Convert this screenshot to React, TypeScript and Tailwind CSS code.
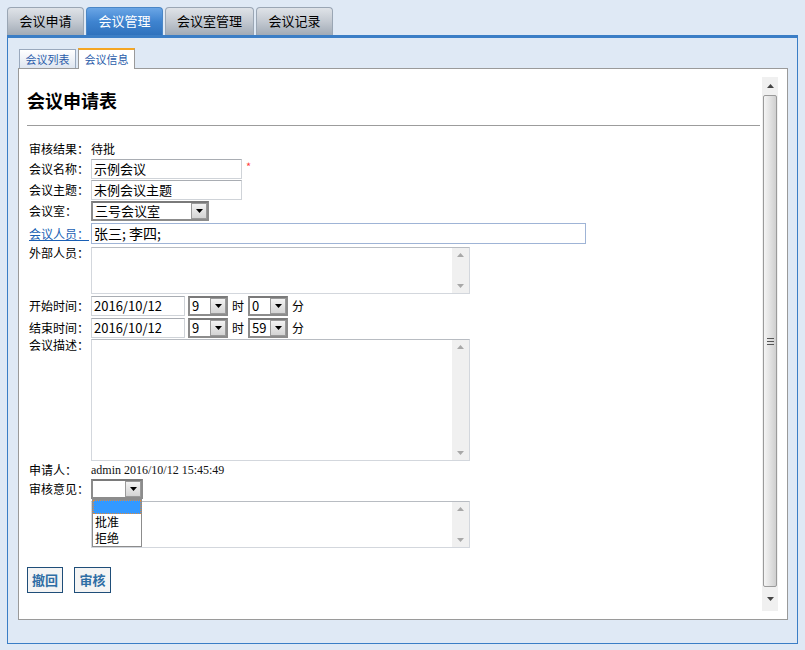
import React from 'react'

const font = { fontFamily: '"Noto Sans CJK SC", "Liberation Sans", sans-serif' }

function Arrow({ up, className = '' }: { up?: boolean; className?: string }) {
  return (
    <svg width="7" height="4" viewBox="0 0 7 4" className={className}>
      {up ? <path d="M0 4 L3.5 0 L7 4 Z" fill="currentColor" /> : <path d="M0 0 L7 0 L3.5 4 Z" fill="currentColor" />}
    </svg>
  )
}

function Select({ value, width }: { value: string; width: number }) {
  return (
    <div
      className="flex h-[20px] items-center border-2 border-[#8c8c8c] border-t-[#7a7a7a] bg-white"
      style={{ width }}
    >
      <span className="flex-1 pb-[2px] pl-[2px] text-[13px] leading-none text-black">{value}</span>
      <div className="flex h-[16px] w-[16px] items-center justify-center border border-[#9a9a9a] bg-gradient-to-b from-[#f3f3f3] to-[#d4d4d4]">
        <Arrow className="text-black" />
      </div>
    </div>
  )
}

function TextBox({ value, width }: { value: string; width: number }) {
  return (
    <div
      className="flex h-[20px] items-center border border-[#cfd3d8] border-t-[#a9adb3] bg-white pb-[2px] pl-[2px] text-[13px] leading-none text-black"
      style={{ width }}
    >
      {value}
    </div>
  )
}

function TextArea({ height }: { height: number }) {
  return (
    <div
      className="flex w-[379px] border border-[#d3d7dd] border-t-[#b8bcc2] bg-white"
      style={{ height }}
    >
      <div className="flex-1" />
      <div className="flex w-[17px] flex-col items-center justify-between bg-[#f0f0f0] py-[5px]">
        <Arrow up className="text-[#a8a8a8]" />
        <Arrow className="text-[#a8a8a8]" />
      </div>
    </div>
  )
}

function Label({ children, link, top }: { children: React.ReactNode; link?: boolean; top?: boolean }) {
  return (
    <div
      className={`w-[62px] shrink-0 text-[12px] ${top ? 'leading-[12px]' : 'leading-[20px]'} ${
        link ? 'text-[#1a5fb4] underline' : 'text-black'
      }`}
    >
      {children}
    </div>
  )
}

export default function App() {
  return (
    <div className="h-[650px] w-[805px] bg-[#dfe9f5] pl-[7px] pt-[7px]" style={font}>
      {/* top tabs */}
      <div className="flex h-[28px] gap-[2px]">
        {['会议申请', '会议管理', '会议室管理', '会议记录'].map((t, i) => (
          <div
            key={t}
            className={`flex h-[28px] items-center justify-center rounded-t-[4px] border border-b-0 pb-[1px] text-[13px] ${
              i === 1
                ? 'border-[#4a86c6] bg-gradient-to-b from-[#6aa6e6] via-[#3f84d0] to-[#2f72bd] text-white'
                : 'border-[#9aa6b4] bg-gradient-to-b from-[#dfe3e8] via-[#c3c9d1] to-[#a2abb6] text-black'
            } ${i === 2 ? 'w-[89px]' : 'w-[77px]'}`}
          >
            {t}
          </div>
        ))}
      </div>

      {/* panel */}
      <div className="h-[609px] w-[791px] border border-t-[3px] border-[#3b7ec6] px-[10px] pt-[10px]">
        {/* sub tabs */}
        <div className="relative z-10 flex h-[20px] items-end gap-[2px] pl-[1px]">
          <div className="flex h-[19px] w-[57px] items-center justify-center border border-b-0 border-[#9aa9bd] bg-gradient-to-b from-white to-[#dfe6f0] text-[11px] text-[#2a5caa]">
            会议列表
          </div>
          <div className="mb-[-1px] flex h-[21px] w-[57px] items-center justify-center border border-b-0 border-[#9a9a9a] border-t-2 border-t-[#f5a623] bg-white pb-[1px] text-[11px] text-[#2a5caa]">
            会议信息
          </div>
        </div>

        {/* content frame */}
        <div className="flex h-[552px] w-[770px] border border-[#9a9a9a] bg-white p-[8px] pr-[9px]">
          <div className="relative flex-1">
            <h2 className="mt-[11px] text-[18px] font-bold leading-[24px] text-black">会议申请表</h2>
            <div className="mt-[13px] h-px w-[733px] bg-[#9c9c9c]" />

            <div className="flex flex-col pl-[2px]">
              <div className="mt-[13px] flex h-[20px]">
                <Label>审核结果：</Label>
                <span className="text-[12px] leading-[20px]">待批</span>
              </div>
              <div className="flex h-[20px] items-center">
                <Label>会议名称：</Label>
                <TextBox value="示例会议" width={151} />
                <span className="ml-[4px] self-start text-[11px] leading-[14px] text-[#ff4040]">*</span>
              </div>
              <div className="mt-[1px] flex h-[20px] items-center">
                <Label>会议主题：</Label>
                <TextBox value="未例会议主题" width={151} />
              </div>
              <div className="mt-[1px] flex h-[20px] items-center">
                <Label>会议室：</Label>
                <Select value="三号会议室" width={118} />
              </div>
              <div className="mt-[2px] flex h-[21px] items-center">
                <Label link>会议人员：</Label>
                <div className="flex h-[21px] w-[495px] items-center border border-[#9fb4d6] bg-white pb-[2px] pl-[2px] text-[14px] leading-none">
                  张三; 李四;
                </div>
              </div>
              <div className="mt-[3px] flex">
                <Label top>外部人员：</Label>
                <TextArea height={47} />
              </div>
              <div className="mt-[2px] flex h-[20px] items-center">
                <Label>开始时间：</Label>
                <TextBox value="2016/10/12" width={94} />
                <div className="ml-[3px]">
                  <Select value="9" width={40} />
                </div>
                <span className="mx-[4px] text-[12px]">时</span>
                <Select value="0" width={40} />
                <span className="ml-[4px] text-[12px]">分</span>
              </div>
              <div className="mt-[2px] flex h-[20px] items-center">
                <Label>结束时间：</Label>
                <TextBox value="2016/10/12" width={94} />
                <div className="ml-[3px]">
                  <Select value="9" width={40} />
                </div>
                <span className="mx-[4px] text-[12px]">时</span>
                <Select value="59" width={40} />
                <span className="ml-[4px] text-[12px]">分</span>
              </div>
              <div className="mt-[1px] flex">
                <Label top>会议描述：</Label>
                <TextArea height={122} />
              </div>
              <div className="flex h-[17px] items-center">
                <div className="w-[62px] shrink-0 text-[12px] leading-[16px]">申请人：</div>
                <span
                  className="text-[12px] leading-[16px] text-[#111]"
                  style={{ fontFamily: '"Liberation Serif", serif' }}
                >
                  admin 2016/10/12 15:45:49
                </span>
              </div>
              <div className="relative mt-[1px] flex h-[20px] items-center">
                <Label>审核意见：</Label>
                <Select value="" width={52} />
                {/* open dropdown list */}
                <div className="absolute left-[63px] top-[20px] z-20 w-[50px] border border-[#8c8c8c] bg-white text-[12px] leading-[16px]">
                  <div className="h-[14px] border border-dotted border-[#e08a3a] bg-[#3399ff]" />
                  <div className="pl-[2px]">批准</div>
                  <div className="pl-[2px]">拒绝</div>
                </div>
              </div>
              <div className="mt-[2px] flex">
                <div className="w-[62px] shrink-0" />
                <TextArea height={47} />
              </div>
            </div>

            <div className="mt-[19px] flex gap-[11px]">
              <button className="flex h-[26px] w-[36px] items-center justify-center border border-[#1f4e79] bg-[#f4f4f4] pb-[1px] text-[13px] font-bold text-[#2f6ea5]">
                撤回
              </button>
              <button className="flex h-[26px] w-[37px] items-center justify-center border border-[#1f4e79] bg-[#f4f4f4] pb-[1px] text-[13px] font-bold text-[#2f6ea5]">
                审核
              </button>
            </div>
          </div>

          {/* page scrollbar */}
          <div className="flex w-[16px] flex-col bg-[#f0f0f0]">
            <div className="flex h-[18px] items-center justify-center">
              <Arrow up className="text-[#444]" />
            </div>
            <div className="mx-[1px] flex flex-1 items-center justify-center rounded-[2px] border border-[#9a9a9a] bg-gradient-to-r from-[#f4f4f4] via-[#e2e2e2] to-[#cfcfcf]">
              <svg width="7" height="7" viewBox="0 0 7 7">
                <path d="M0 0.5 H7 M0 3.5 H7 M0 6.5 H7" stroke="#555" strokeWidth="1" />
              </svg>
            </div>
            <div className="flex h-[24px] items-center justify-center">
              <Arrow className="text-[#444]" />
            </div>
          </div>
        </div>
      </div>
    </div>
  )
}
